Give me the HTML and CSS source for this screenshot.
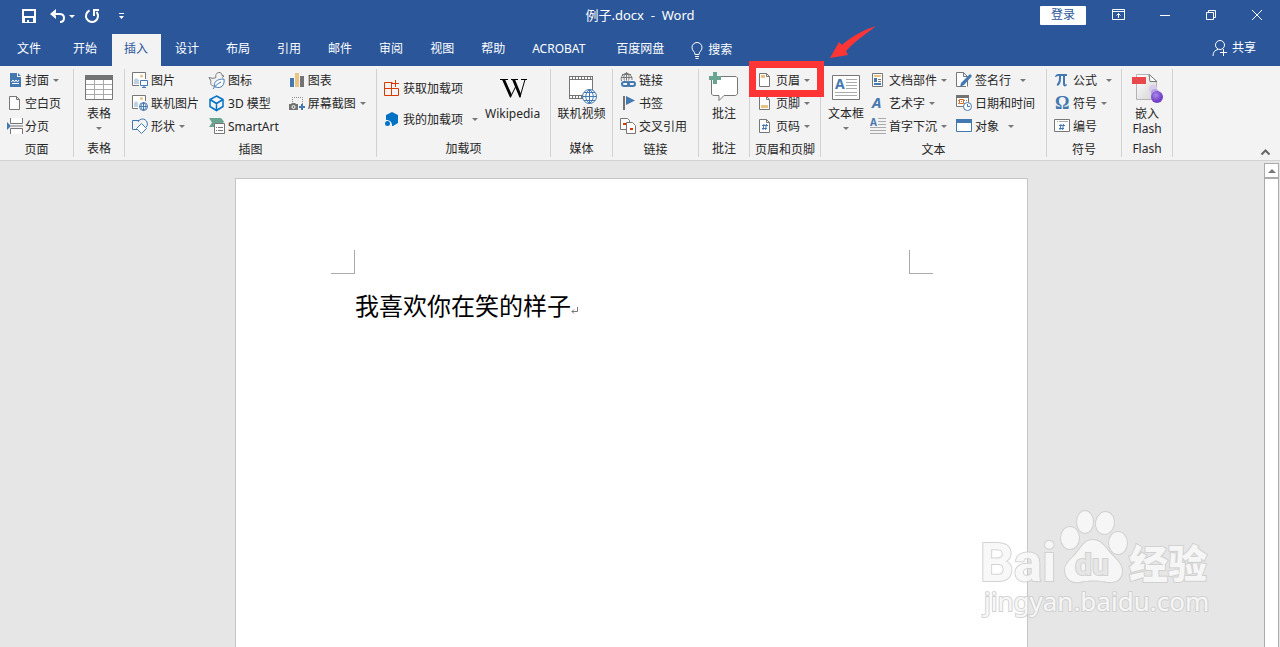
FILE: index.html
```html
<!DOCTYPE html>
<html lang="zh-CN">
<head>
  <meta charset="UTF-8">
  <meta name="viewport" content="width=device-width, initial-scale=1.0">
  <title>例子.docx - Word</title>
  <link rel="stylesheet" href="styles.css">
</head>
<body>
  <header class="titlebar">
    <div class="quick">
      <button class="quick-btn" aria-label="保存">
        <svg width="16" height="16" viewBox="0 0 16 16"><path class="w-fill" fill-rule="evenodd" d="M1 1h14v14H1zM3 3v5h10V3zM4 10v4h2v-2h2v2h4v-4z"/></svg>
      </button>
      <button class="quick-btn undo" aria-label="撤消">
        <svg width="17" height="16" viewBox="0 0 17 16"><path class="w-fill" d="M0 6l6-5v3.500L4.500 6 6 8v3z"/><path class="w-line thick" d="M3 6h6.500c3 0 4.500 1.800 4.500 4s-1.500 4-4 4"/></svg>
        <span class="caret"></span>
      </button>
      <button class="quick-btn redo" aria-label="重复">
        <svg width="16" height="16" viewBox="0 0 16 16"><path class="w-line thick" d="M5.500 2.500A6 6 0 1 0 12.500 4M10 8V2h5"/></svg>
      </button>
      <button class="quick-btn" aria-label="自定义快速访问工具栏">
        <svg width="9" height="8" viewBox="0 0 9 8"><path class="w-fill" d="M2 1h5v1H2zM2 4h5L4.500 7z"/></svg>
      </button>
    </div>
    <div class="doc-title">例子.docx  -  Word</div>
    <div class="window-tools">
      <button class="login">登录</button>
      <button class="win-btn" aria-label="功能区显示选项">
        <svg width="14" height="12" viewBox="0 0 14 12"><path class="w-line" d="M.5.5h12v10H.5zM.5 2.500h12M6.500 9V4.500M4.500 6.500l2-2 2 2"/></svg>
      </button>
      <button class="win-btn" aria-label="最小化">
        <svg width="12" height="12" viewBox="0 0 12 12"><path class="w-line" d="M1 6.500h10"/></svg>
      </button>
      <button class="win-btn" aria-label="还原">
        <svg width="12" height="12" viewBox="0 0 12 12"><path class="w-line" d="M1.500 3.500h7v7h-7zM3.500 3V1.500h7v7H9"/></svg>
      </button>
      <button class="win-btn" aria-label="关闭">
        <svg width="12" height="12" viewBox="0 0 12 12"><path class="w-line" d="M1 1l10 10M11 1L1 11"/></svg>
      </button>
    </div>
  </header>

  <nav class="tabs">
    <button class="tab file">文件</button>
    <button class="tab">开始</button>
    <button class="tab active">插入</button>
    <button class="tab">设计</button>
    <button class="tab">布局</button>
    <button class="tab">引用</button>
    <button class="tab">邮件</button>
    <button class="tab">审阅</button>
    <button class="tab">视图</button>
    <button class="tab">帮助</button>
    <button class="tab acrobat">ACROBAT</button>
    <button class="tab">百度网盘</button>
    <button class="tab search">
      <svg width="12" height="17" viewBox="0 0 12 17"><path class="w-line" d="M4 12.500c0-3-3-3.500-3-7a5 5 0 0 1 10 0c0 3.500-3 4-3 7zM4 14.500h4M4.500 16.500h3"/></svg>
      搜索
    </button>
    <button class="tab share">
      <svg width="16" height="18" viewBox="0 0 16 18"><circle class="w-line" cx="8" cy="6" r="4.500"/><path class="w-line" d="M1 17c0-4 2-6 5-6.500M8 13.500h7M11.500 10v7"/></svg>
      共享
    </button>
  </nav>

  <section class="ribbon">
    <div class="group g-pages">
      <div class="group-body">
        <div class="col">
          <button class="cmd">
            <svg class="icon" viewBox="0 0 17 17"><path class="blue" d="M4 1h7v4h4v10H4zM12 1l3 3h-3z"/><path class="w-line" d="M5.500 10l1.500-2 1.500 2L10 8l1.500 2L13 8M6 11.500h7"/></svg>
            封面<span class="caret"></span></button>
          <button class="cmd">
            <svg class="icon" viewBox="0 0 17 17"><path class="paper" d="M3.500 1.500h7l3 3v10h-10zM10.500 1.500v3h3"/></svg>
            空白页</button>
          <button class="cmd">
            <svg class="icon" viewBox="0 0 17 17"><path class="blue" d="M1 4l4 4-4 4z"/><path class="paper" d="M4.500 0v5.500h12V0M4.500 16v-5.500h12V16"/><path class="gray-line" d="M5 8h12"/></svg>
            分页</button>
        </div>
      </div>
      <div class="group-name">页面</div>
    </div>

    <div class="group g-single">
      <div class="group-body">
        <button class="big">
          <svg class="big-icon" viewBox="0 0 32 32"><path class="paper" d="M2.500 2.500h27v24h-27z"/><path class="gray" d="M2 2h28v5H2z"/><path class="thin-line" d="M3 11.500h26M3 16.500h26M3 21.500h26M11.500 7v19M20.500 7v19"/></svg>
          <span>表格</span><span class="caret"></span>
        </button>
      </div>
      <div class="group-name">表格</div>
    </div>

    <div class="group g-pictures">
      <div class="group-body">
        <div class="col">
          <button class="cmd">
            <svg class="icon" viewBox="0 0 17 17"><path class="paper" d="M7 13.500H.5V.5h13V7"/><circle class="gold" cx="9.500" cy="4" r="1.500"/><path class="pale" d="M2 12V8l2-2 3 2v4z"/><path class="blue-line paper-fill" d="M8.500 8.500h7v5h-7zM12 13.500V16M10 15.500h4"/></svg>
            图片</button>
          <button class="cmd">
            <svg class="icon" viewBox="0 0 17 17"><path class="paper" d="M6 13.500H.5V.5h13V6"/><circle class="gold" cx="9.500" cy="3.500" r="1.500"/><path class="pale" d="M2 12V8l2-2 2 2v4z"/><circle class="blue-line paper-fill" cx="11.500" cy="11.500" r="4"/><path class="blue-line" d="M7.500 11.500h8M11.500 7.500v8M11.500 7.500c-3 2-3 6 0 8 3-2 3-6 0-8"/></svg>
            联机图片</button>
          <button class="cmd">
            <svg class="icon" viewBox="0 0 17 17"><path class="blue-line" d="M8 11.500H.5v-9H7"/><path class="blue-line" d="M6 4c2-4 7-4 9 0 1 3 0 5-2 6"/><path class="blue-line paper-fill" d="M9.500 5.500l5 5-5 5-5-5z"/></svg>
            形状<span class="caret"></span></button>
        </div>
        <div class="col">
          <button class="cmd">
            <svg class="icon" viewBox="0 0 17 17"><path class="gray-line" d="M5 14c-3 0-4-3-3-5L0 5.500c3 1 5 1 7 0-1-3 1-5 3-5s3 1 3 3l2 .5-2 1.500"/><path class="blue-line paper-fill" d="M6 15c-2-5 2-8 9-8 1 6-3 10-8 8zM4 17c2-3 4-5 8-7"/></svg>
            图标</button>
          <button class="cmd">
            <svg class="icon" viewBox="0 0 17 17"><path class="azure-line" d="M7.500 1L14 4.500v7L7.500 15.500 1 11.500v-7zM1 4.500l6.500 4 6.500-4M7.500 8.500v7"/></svg>
            3D 模型</button>
          <button class="cmd">
            <svg class="icon" viewBox="0 0 17 17"><path class="green" d="M0 0h12l3 3.500-1 1.500H5v4H0l3-4.500z"/><path class="paper" d="M5.500 5.500h10v10h-10z"/><path class="gray-line" d="M7 9.500h1M9 9.500h5M7 12.500h1M9 12.500h5"/></svg>
            SmartArt</button>
        </div>
        <div class="col">
          <button class="cmd">
            <svg class="icon" viewBox="0 0 17 17"><path class="blue" d="M1 6h4v9H1z"/><path class="gold" d="M6 1h4v14H6z"/><path class="gray" d="M11 4h4v11h-4z"/></svg>
            图表</button>
          <button class="cmd">
            <svg class="icon" viewBox="0 0 17 17"><path class="dotted" d="M3.500 7V2.500h10V9"/><path class="gray" d="M0 9h2l1-1h3l1 1h2v6H0z"/><circle class="w-line" cx="4.500" cy="12" r="1.500"/><path class="blue" d="M12 9h2v2h2v2h-2v2h-2v-2h-2v-2h2z"/></svg>
            屏幕截图<span class="caret"></span></button>
        </div>
      </div>
      <div class="group-name">插图</div>
    </div>

    <div class="group g-addins">
      <div class="group-body">
        <div class="col two">
          <button class="cmd">
            <svg class="icon" viewBox="0 0 17 17"><path class="red-line" d="M8.500 2.500h-8v13h14v-7H.500M7.500 2.500v13M11.500 0v7M8 3.500h7"/></svg>
            获取加载项</button>
          <button class="cmd">
            <svg class="icon" viewBox="0 0 17 17"><path class="azure" d="M2 4l6-3 6 3v8l-5 3H8c0-4-2-6-6-6z"/><circle class="azure" cx="3.500" cy="12.500" r="2.500"/></svg>
            我的加载项<span class="caret far"></span></button>
        </div>
        <button class="big">
          <svg class="big-icon" viewBox="0 0 32 32"><path d="M3 6h8v1H3zM14 6h7v1h-7zM24 6h6v1h-6z"/><path d="M5 6.500h3L14.500 21 14 24.500h-1zM15 6.500h3L24 21l-.5 3.500h-1z"/><path class="ink-line" d="M13.500 24L19 13M23 24l5-17.500"/></svg>
          <span>Wikipedia</span>
        </button>
      </div>
      <div class="group-name">加载项</div>
    </div>

    <div class="group g-media">
      <div class="group-body">
        <button class="big">
          <svg class="big-icon" viewBox="0 0 32 32"><path class="paper" d="M4.500 3.500h23v22h-23z"/><path class="gray" d="M4 3h24v4H4zM4 22h14v4H4z"/><path class="film" d="M5 5h22M5 24h12"/><circle class="blue-line paper-fill" cx="24.500" cy="23.500" r="7"/><path class="blue-line" d="M17.500 23.500h14M24.500 16.500v14M19 19.500h11M19 27.500h11M24.500 16.500c-5 4-5 10 0 14 5-4 5-10 0-14"/></svg>
          <span>联机视频</span>
        </button>
      </div>
      <div class="group-name">媒体</div>
    </div>

    <div class="group g-links">
      <div class="group-body">
        <div class="col">
          <button class="cmd">
            <svg class="icon" viewBox="0 0 17 17"><path class="gray-line" d="M1.500 9a5.500 5.500 0 1 1 10.500-1M1 5.500h11M6.500.5v8M6.500.5c-3 2-3 5-2 8M6.500.5c3 2 3 5 2 8M2 2.500h9"/><rect class="blue-line thick" x="2" y="10" width="7" height="4" rx="2"/><rect class="blue-line thick" x="8" y="10" width="7" height="4" rx="2"/></svg>
            链接</button>
          <button class="cmd">
            <svg class="icon" viewBox="0 0 17 17"><path class="gray" d="M3 1h2v14H3z"/><path class="blue" d="M6 1l9 4.500L6 10z"/></svg>
            书签</button>
          <button class="cmd">
            <svg class="icon" viewBox="0 0 17 17"><path class="paper" d="M.5.5h7l2 2v9h-9z"/><path class="red" d="M3 5h4v2H3z"/><path class="paper" d="M6.500 4.500h6l3 3v8h-9z"/><path class="red" d="M10 10h3v2h-3z"/></svg>
            交叉引用</button>
        </div>
      </div>
      <div class="group-name">链接</div>
    </div>

    <div class="group g-single">
      <div class="group-body">
        <button class="big">
          <svg class="big-icon" viewBox="0 0 32 32"><path class="paper" d="M4 3.500h24l1.500 1.500v16l-2 1.500H16l-5 5v-5H5l-1.500-1.500v-16z"/><path class="green" d="M5 -1h4v4h4v4H9v4H5V7H1V3h4z"/></svg>
          <span>批注</span>
        </button>
      </div>
      <div class="group-name">批注</div>
    </div>

    <div class="group g-header">
      <div class="group-body">
        <div class="col">
          <button class="cmd">
            <svg class="icon" viewBox="0 0 17 17"><path class="paper" d="M2.500 1.500h7l3 3v10h-10zM9.500 1.500v3h3"/><path class="gold" d="M4 3h4v3H4z"/></svg>
            页眉<span class="caret"></span></button>
          <button class="cmd">
            <svg class="icon" viewBox="0 0 17 17"><path class="paper" d="M2.500 1.500h7l3 3v10h-10zM9.500 1.500v3h3"/><path class="gold" d="M4 10h7v3H4z"/></svg>
            页脚<span class="caret"></span></button>
          <button class="cmd">
            <svg class="icon" viewBox="0 0 17 17"><path class="paper" d="M2.500 1.500h7l3 3v10h-10zM9.500 1.500v3h3"/><path class="blue-line" d="M7 6l-1 6M9.500 6l-1 6M5 7.500h6M5 10.500h5"/></svg>
            页码<span class="caret"></span></button>
        </div>
      </div>
      <div class="group-name">页眉和页脚</div>
      <div class="mark-box"></div>
      <svg class="mark-arrow" width="46" height="34" viewBox="0 0 46 34"><path d="M0 32L9 16l3 3C21 11 33 4 46 0 36 8 25 15 16 25l2 4z"/></svg>
    </div>

    <div class="group g-text">
      <div class="group-body">
        <button class="big">
          <svg class="big-icon" viewBox="0 0 32 32"><path class="paper" d="M2.500 2.500h27v24h-27z"/><text class="glyph" x="5" y="16" font-size="14">A</text><path class="thin-line" d="M16 6.500h11M16 9.500h11M16 12.500h11M16 15.500h11M5 19.500h22M5 22.500h22"/></svg>
          <span>文本框</span><span class="caret"></span>
        </button>
        <div class="col">
          <button class="cmd">
            <svg class="icon" viewBox="0 0 17 17"><path class="paper" d="M2.500 1.500h10v13h-10z"/><path class="gold" d="M4 3h7v2H4z"/><path class="blue" d="M4 6h3v4H4zM4 11h7v2H4z"/><path class="gray-line" d="M8 7.500h3M8 9.500h3"/></svg>
            文档部件<span class="caret"></span></button>
          <button class="cmd">
            <svg class="icon" viewBox="0 0 17 17"><text class="glyph italic" x="2" y="13" font-size="15">A</text></svg>
            艺术字<span class="caret"></span></button>
          <button class="cmd">
            <svg class="icon" viewBox="0 0 17 17"><text class="glyph" x="0" y="8" font-size="10">A</text><path class="thin-line" d="M8 .5h8M8 3.500h8M8 6.500h8M0 9.500h16M0 12.500h16M0 15.500h16"/></svg>
            首字下沉<span class="caret"></span></button>
        </div>
        <div class="col">
          <button class="cmd">
            <svg class="icon" viewBox="0 0 17 17"><path class="paper" d="M10 14.500H.5V.5h7l4 4v10M7.500.5v4h4"/><path class="blue" d="M14 2l2 2-8 9-4 2 1-4z"/></svg>
            签名行<span class="caret far"></span></button>
          <button class="cmd">
            <svg class="icon" viewBox="0 0 17 17"><path class="paper" d="M.5.5h12v11H.5z"/><path class="gray" d="M0 0h13v3H0z"/><path class="dotted" d="M2 5.500h9M2 8.500h9"/><path class="orange-line paper-fill" d="M3.500 4.500h4v4h-4z"/><path class="orange-line" d="M5 6.500h1"/><circle class="blue-line paper-fill" cx="11.500" cy="11.500" r="4"/><path class="blue-line" d="M11.500 9v2.500H14"/></svg>
            日期和时间</button>
          <button class="cmd">
            <svg class="icon" viewBox="0 0 17 17"><path class="blue-line paper-fill" d="M.5 1.500h15v12H.5z"/><path class="blue" d="M0 1h16v4H0z"/></svg>
            对象<span class="caret far"></span></button>
        </div>
      </div>
      <div class="group-name">文本</div>
    </div>

    <div class="group g-symbols">
      <div class="group-body">
        <div class="col">
          <button class="cmd">
            <svg class="icon" viewBox="0 0 17 17"><path class="blue" d="M1 5c1-3 2-3 4-3h8v2h-2v7c0 2 1 2 2 1v1c-1 2-4 2-4-1V4H7c0 4 0 7-2 9-1 1-3 1-2-1 2-2 2-5 2-8-2 0-2 0-3 1z"/></svg>
            公式<span class="caret far"></span></button>
          <button class="cmd">
            <svg class="icon" viewBox="0 0 17 17"><text class="glyph serif" x="1" y="14" font-size="18">Ω</text></svg>
            符号<span class="caret"></span></button>
          <button class="cmd">
            <svg class="icon" viewBox="0 0 17 17"><path class="paper" d="M.5 1.500h15v12H.5z"/><path class="thin-line" d="M3 3.500h1M5 3.500h9"/><path class="blue-line" d="M7 6l-1 6M9.500 6l-1 6M5 7.500h6M5 10.500h5"/></svg>
            编号</button>
        </div>
      </div>
      <div class="group-name">符号</div>
    </div>

    <div class="group g-single">
      <div class="group-body">
        <button class="big">
          <svg class="big-icon" viewBox="0 0 32 32">
            <defs>
              <linearGradient id="sheet" x1="0" y1="0" x2="1" y2="1"><stop offset="0" stop-color="#fff"/><stop offset="1" stop-color="#d2d2d2"/></linearGradient>
              <radialGradient id="ball" cx=".4" cy=".35"><stop offset="0" stop-color="#a88be8"/><stop offset="1" stop-color="#7440c8"/></radialGradient>
            </defs>
            <path d="M5.500 1.500h13l7 7v18h-20z" fill="url(#sheet)" stroke="#b4b4b4"/>
            <path d="M18 1.500l1 7h7z" fill="#fff" stroke="#777"/>
            <path d="M1 4h14v7H1z" fill="#e8484c"/>
            <circle cx="22" cy="16" r="4" fill="#d9cdee"/>
            <circle cx="24" cy="20" r="4" fill="#b9a0e4"/>
            <circle cx="26" cy="24" r="6" fill="url(#ball)"/>
          </svg>
          <span>嵌入</span><span>Flash</span>
        </button>
      </div>
      <div class="group-name">Flash</div>
    </div>

    <button class="collapse" aria-label="折叠功能区">
      <svg width="11" height="7" viewBox="0 0 11 7"><path d="M1.500 5.500l4-4 4 4"/></svg>
    </button>
  </section>

  <main class="workspace">
    <article class="page">
      <div class="crop-marks"><i class="crop left"></i><i class="crop right"></i></div>
      <p class="text">我喜欢你在笑的样子<svg width="9" height="9" viewBox="0 0 9 9"><path d="M6.500 1v4.500H1M3 3.500l-2 2 2 2"/></svg></p>
    </article>
    <div class="scrollbar">
      <button class="scroll-up" aria-label="向上滚动"></button>
      <div class="thumb"></div>
    </div>
    <svg class="watermark" width="240" height="120" viewBox="0 0 240 120">
      <text class="wm-latin" x="6" y="74" font-size="53">Bai</text>
      <ellipse cx="96" cy="31" rx="9" ry="11"/>
      <ellipse cx="111" cy="15" rx="8" ry="11"/>
      <ellipse cx="131" cy="16" rx="9" ry="11" transform="rotate(10 131 16)"/>
      <ellipse cx="144" cy="36" rx="9" ry="11"/>
      <path d="M119 33c9 0 13 9 19 15s10 10 10 16c0 8-6 12-14 11-10-2-19-2-29 0-8 1-14-4-14-12 0-6 5-10 10-15 6-7 9-15 18-15z"/>
      <text class="wm-du" x="101" y="68" font-size="30">du</text>
      <text class="wm-cjk" x="155" y="71" font-size="39">经验</text>
      <text class="wm-site" x="10" y="104" font-size="26">jingyan.baidu.com</text>
    </svg>
  </main>
</body>
</html>
```

FILE: styles.css
```css
* {
  box-sizing: border-box;
}
body {
  margin: 0;
  height: 100vh;
  display: flex;
  flex-direction: column;
  overflow: hidden;
  font-family: "Noto Sans", "Noto Sans CJK SC", sans-serif;
  font-size: 12px;
  line-height: 16px;
  color: #262626;
  background: #e6e6e6;
}
button {
  font: inherit;
  color: inherit;
  background: none;
  border: none;
  padding: 0;
  white-space: nowrap;
  cursor: pointer;
}
svg {
  flex: none;
  overflow: visible;
}
.caret {
  flex: none;
  width: 6px;
  height: 3px;
  margin-left: 2px;
  border: 3px solid transparent;
  border-top-color: #777;
  border-bottom: none;
}
.caret.far {
  margin-left: 7px;
}

/* title bar */
.titlebar {
  display: grid;
  grid-template-columns: 1fr auto 1fr;
  align-items: center;
  height: 30px;
  background: #2b579a;
  color: white;
}
.quick {
  display: flex;
  align-items: center;
  padding: 2px 0 0 21px;
}
.quick-btn {
  display: flex;
  align-items: center;
}
.quick-btn .caret {
  border-top-color: white;
}
.undo {
  margin-left: 13px;
}
.redo {
  margin: 0 17px 0 9px;
}
.doc-title {
  white-space: pre;
  font-size: 13px;
}
.window-tools {
  display: flex;
  align-items: center;
  justify-content: flex-end;
}
.login {
  width: 46px;
  height: 19px;
  margin-right: 10px;
  border-radius: 1px;
  background: white;
  color: #2b579a;
}
.win-btn {
  display: flex;
  align-items: center;
  justify-content: center;
  width: 46px;
  height: 30px;
}

/* tabs */
.tabs {
  display: flex;
  gap: 2px;
  padding: 4px 11px 0 5px;
  background: #2b579a;
  color: white;
}
.tab {
  display: flex;
  align-items: center;
  gap: 5px;
  height: 32px;
  padding: 0 13px 2px 12px;
}
.tab.file {
  margin-right: 5px;
}
.tab.acrobat {
  margin-right: 4px;
}
.tab.active {
  background: #f3f3f3;
  color: #2b579a;
}
.tab.search {
  padding-bottom: 0;
}
.tab.share {
  margin-left: auto;
  padding-bottom: 4px;
  gap: 4px;
}

/* ribbon */
.ribbon {
  display: flex;
  padding: 3px 0;
  background: #f3f3f3;
  border-bottom: 1px solid #d2d2d2;
}
.group {
  position: relative;
  flex: none;
  display: flex;
  flex-direction: column;
  height: 88px;
  border-right: 1px solid #d2d2d2;
}
.group-body {
  display: flex;
  gap: 10px;
  height: 69px;
  padding-left: 7px;
}
.group-name {
  padding-top: 4px;
  text-align: center;
}
.g-pages {
  width: 74px;
}
.g-pages .group-body {
  padding-left: 6px;
}
.g-single {
  width: 51px;
}
.g-pictures {
  width: 252px;
}
.g-addins {
  width: 174px;
}
.g-addins .group-body {
  gap: 7px;
}
.g-media {
  width: 62px;
}
.g-single .group-body,
.g-media .group-body {
  justify-content: center;
  padding-left: 0;
}
.g-links {
  width: 86px;
}
.g-header {
  width: 71px;
}
.g-text {
  width: 226px;
}
.g-text .group-body {
  gap: 9px;
}
.g-text .big {
  margin-right: -3px;
}
.g-symbols {
  width: 75px;
}
.col {
  display: flex;
  flex-direction: column;
}
.col.two {
  gap: 8px;
  padding-top: 8px;
}
.cmd {
  display: flex;
  align-items: center;
  gap: 2px;
  height: 23px;
}
.icon {
  width: 17px;
  height: 17px;
}
.big {
  display: flex;
  flex-direction: column;
  align-items: center;
  padding-top: 4px;
  line-height: 15px;
}
.big-icon {
  width: 32px;
  height: 32px;
  margin-bottom: 1px;
}
.big .caret {
  margin: 6px 0 0;
}
.collapse {
  align-self: flex-end;
  height: 12px;
  margin: 0 9px 1px auto;
}
.collapse path {
  fill: none;
  stroke: #666;
  stroke-width: 2;
}

/* icon colours */
.w-fill { fill: white; }
.w-line { fill: none; stroke: white; }
.blue { fill: #4478b0; }
.azure { fill: #0072c6; }
.gold { fill: #eac282; }
.green { fill: #6aa592; }
.gray { fill: #737373; }
.red { fill: #d83b01; }
.pale { fill: #bdd0e4; }
.paper { fill: white; stroke: #777; }
.gray-line { fill: none; stroke: #777; }
.thin-line { fill: none; stroke: #aaa; }
.blue-line { fill: none; stroke: #4478b0; }
.azure-line { fill: none; stroke: #0072c6; stroke-width: 1.5; }
.red-line { fill: none; stroke: #d83b01; }
.orange-line { fill: none; stroke: #d86b20; }
.ink-line { fill: none; stroke: black; }
.paper-fill { fill: white; }
.dotted { fill: none; stroke: #888; stroke-dasharray: 1 1; }
.film { fill: none; stroke: white; stroke-width: 2; stroke-dasharray: 2 1; }
.thick { stroke-width: 2; }
.glyph {
  fill: #4478b0;
  font-family: "Noto Sans", sans-serif;
  font-weight: bold;
}
.glyph.italic {
  font-style: italic;
}
.glyph.serif {
  font-family: "Liberation Serif", serif;
}

/* red highlight over the header button */
.mark-box {
  position: absolute;
  z-index: 2;
  left: -1px;
  top: -8px;
  width: 75px;
  height: 36px;
  border: 7px solid #fd3535;
  pointer-events: none;
}
.mark-arrow {
  position: absolute;
  z-index: 2;
  left: 80px;
  top: -43px;
  fill: #fd3535;
}

/* document */
.workspace {
  position: relative;
  flex: 1;
  display: flex;
  min-height: 0;
}
.page {
  width: 793px;
  margin: 17px auto 0;
  padding: 71px 94px 0 95px;
  background: white;
  border: 1px solid #c6c6c6;
  border-bottom: none;
}
.crop-marks {
  display: flex;
  justify-content: space-between;
}
.crop {
  width: 24px;
  height: 24px;
  border-bottom: 1px solid #aaa;
}
.crop.left {
  border-right: 1px solid #aaa;
}
.crop.right {
  border-left: 1px solid #aaa;
}
.text {
  margin: 15px 24px;
  font-size: 24px;
  line-height: 34px;
  color: black;
}
.text path {
  fill: none;
  stroke: #777;
}
.scrollbar {
  display: flex;
  flex-direction: column;
  width: 15px;
  margin: 2px 1px 0;
}
.scroll-up {
  display: flex;
  align-items: center;
  justify-content: center;
  height: 15px;
  border: 1px solid #ababab;
  background: white;
}
.scroll-up::before {
  content: "";
  border: 4px solid transparent;
  border-bottom-color: #777;
  border-top: none;
}
.thumb {
  flex: 1;
  border: 1px solid #ababab;
  border-bottom: none;
  background: white;
}
.watermark {
  position: absolute;
  right: 66px;
  bottom: 20px;
  fill: #f8f8f8;
  stroke: #cfcfcf;
  stroke-width: 2;
  paint-order: stroke;
  opacity: 0.9;
}
.wm-latin,
.wm-du {
  font-family: Roboto, sans-serif;
  font-weight: bold;
}
.wm-du {
  fill: #e6e6e6;
}
.wm-cjk {
  font-family: "Noto Sans CJK SC", sans-serif;
  font-weight: 900;
}
.wm-site {
  font-family: "Noto Sans", sans-serif;
}
```
